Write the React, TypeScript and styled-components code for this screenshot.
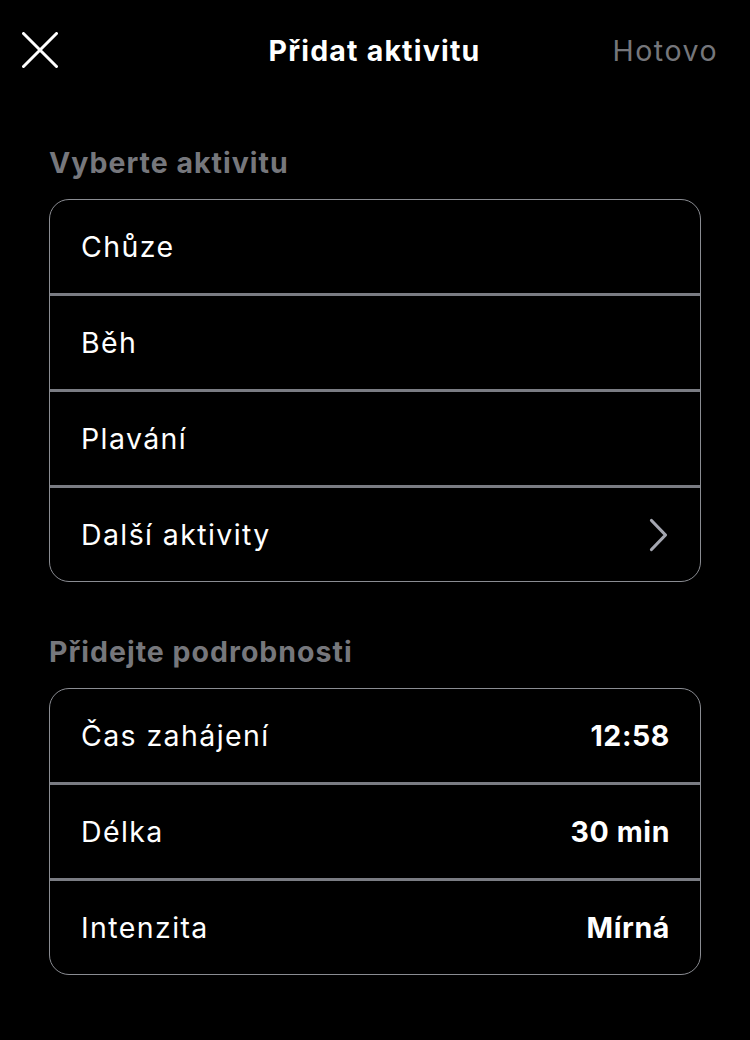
import React from "react";
import styled, { createGlobalStyle } from "styled-components";

const Global = createGlobalStyle`
  html, body { margin: 0; padding: 0; background: #000; }
  body { font-family: Inter, "Noto Sans", sans-serif; color: #fff; -webkit-font-smoothing: antialiased; }
`;

const Page = styled.div`
  width: 750px;
  min-height: 1040px;
  background: #000;
  box-sizing: border-box;
`;

const Header = styled.header`
  height: 100px;
  display: grid;
  grid-template-columns: 1fr auto 1fr;
  align-items: center;
  padding: 0 33px 0 22px;
`;

const CloseButton = styled.button`
  justify-self: start;
  background: none;
  border: 0;
  padding: 0;
  width: 36px;
  height: 36px;
  display: flex;
  cursor: pointer;
`;

const Title = styled.h1`
  margin: 0 0 0 10px;
  font-size: 28.5px;
  font-weight: 700;
  letter-spacing: 1.2px;
  color: #fff;
`;

const Done = styled.button`
  justify-self: end;
  background: none;
  border: 0;
  padding: 0;
  font-family: inherit;
  font-size: 28.5px;
  font-weight: 400;
  letter-spacing: 1.5px;
  color: #75767b;
  margin-right: -1px;
`;

const Content = styled.main`
  padding: 40px 49px 0;
  display: flex;
  flex-direction: column;
`;

const SectionTitle = styled.h2<{ $top?: number }>`
  margin: ${(p) => p.$top ?? 0}px 0 0;
  height: 46px;
  font-size: 28.5px;
  font-weight: 700;
  letter-spacing: 1px;
  color: #76777c;
  line-height: 46px;
`;

const Card = styled.div`
  margin-top: 13px;
  border: 1.5px solid #8a8c92;
  border-radius: 20px;
  overflow: hidden;
`;

const Row = styled.div`
  height: 93px;
  display: flex;
  align-items: center;
  justify-content: space-between;
  padding: 0 31px 0 31px;
  font-size: 28.5px;
  letter-spacing: 1.4px;
  color: #fff;
  & + & {
    border-top: 3px solid #7a7c83;
  }
`;

const Value = styled.span`
  font-weight: 700;
  letter-spacing: 0.6px;
  margin-right: -1px;
`;

const Chevron = styled.svg`
  width: 20px;
  height: 34px;
`;

const CloseIcon = () => (
  <svg width="36" height="36" viewBox="0 0 36 36">
    <path d="M1.5 1.5 L34.5 34.5 M34.5 1.5 L1.5 34.5" stroke="#fff" strokeWidth="3" strokeLinecap="round" />
  </svg>
);

const activities = ["Chůze", "Běh", "Plavání"];
const details = [
  ["Čas zahájení", "12:58"],
  ["Délka", "30 min"],
  ["Intenzita", "Mírná"],
];

export default function App() {
  return (
    <Page>
      <Global />
      <Header>
        <CloseButton aria-label="Zavřít">
          <CloseIcon />
        </CloseButton>
        <Title>Přidat aktivitu</Title>
        <Done>Hotovo</Done>
      </Header>
      <Content>
        <SectionTitle>Vyberte aktivitu</SectionTitle>
        <Card>
          {activities.map((a) => (
            <Row key={a}>{a}</Row>
          ))}
          <Row>
            Další aktivity
            <Chevron viewBox="0 0 20 34">
              <path d="M2.5 2.5 L16.5 17 L2.5 31.5" fill="none" stroke="#a4a6b0" strokeWidth="3.2" strokeLinecap="round" strokeLinejoin="round" />
            </Chevron>
          </Row>
        </Card>
        <SectionTitle $top={47}>Přidejte podrobnosti</SectionTitle>
        <Card>
          {details.map(([k, v]) => (
            <Row key={k}>
              {k}
              <Value>{v}</Value>
            </Row>
          ))}
        </Card>
      </Content>
    </Page>
  );
}
